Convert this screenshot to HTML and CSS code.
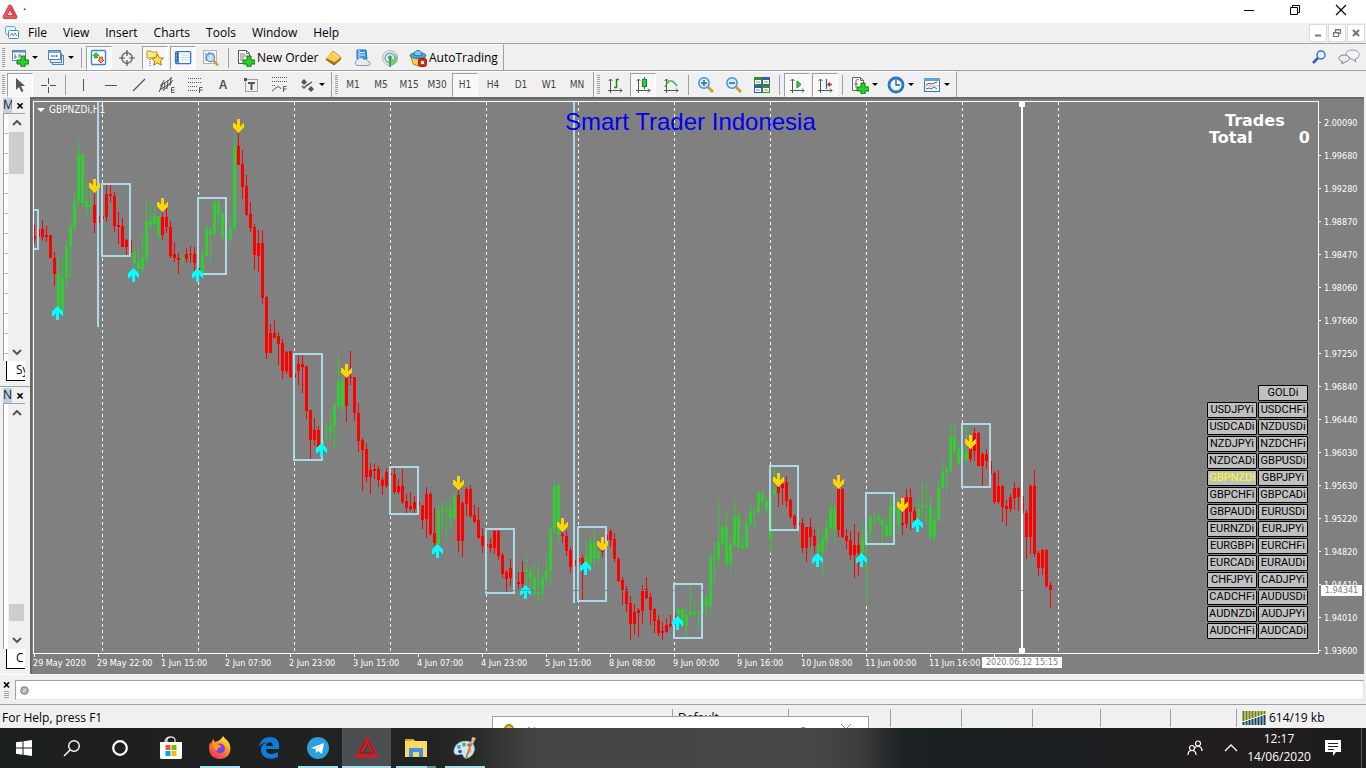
FILE: index.html
```html
<!DOCTYPE html>
<html lang="en">
<head>
  <meta charset="UTF-8" />
  <meta name="viewport" content="width=device-width, initial-scale=1.0" />
  <title>GBPNZDi,H1</title>
  <link rel="stylesheet" href="styles.css">
</head>
<body>
  <header class="titlebar">
    <svg class="app-logo" width="16" height="16" viewBox="0 0 16 16"><path d="M8 2.5 2.5 13h11z" fill="none" stroke="#d9434e" stroke-width="3.8" stroke-linejoin="round"/><path d="M8 2.5 2.5 13h11M6 9.5h5" fill="none" stroke="#f08a90" stroke-width=".7"/></svg>
    <span class="app-name">.</span>
    <div class="win-buttons">
      <button aria-label="Minimize"><svg width="12" height="12" viewBox="0 0 12 12"><path d="M1 6.500h10" stroke="#000"/></svg></button>
      <button aria-label="Restore"><svg width="12" height="12" viewBox="0 0 12 12"><path d="M1.500 3.500h7v7h-7zM3.500 3.500v-2h7v7h-2" fill="none" stroke="#000"/></svg></button>
      <button aria-label="Close"><svg width="12" height="12" viewBox="0 0 12 12"><path d="m1 1 10 10M11 1 1 11" stroke="#000" stroke-width="1.2"/></svg></button>
    </div>
  </header>

  <nav class="menubar">
    <svg class="menu-logo" width="16" height="16" viewBox="0 0 16 16"><rect x="1.500" y="1.500" width="10" height="8" rx="1" fill="#e6f2fb" stroke="#6ea5d2"/><rect x="4.500" y="5.500" width="10" height="8" rx="1" fill="#fff" stroke="#4a8ac4"/><path d="m6 11 2-3 1.500 3L11 8l2 3" fill="none" stroke="#4a8ac4"/></svg>
    <button>File</button>
    <button>View</button>
    <button>Insert</button>
    <button>Charts</button>
    <button>Tools</button>
    <button>Window</button>
    <button>Help</button>
    <div class="mdi-buttons">
      <button aria-label="Minimize chart"><svg width="10" height="10" viewBox="0 0 10 10"><path d="M2 7.500h6" stroke="#6d7a8c" stroke-width="2"/></svg></button>
      <button aria-label="Restore chart"><svg width="10" height="10" viewBox="0 0 10 10"><path d="M1.500 4.500h5v4h-5zM3.500 4V1.500h5v4H7M3 2h6M1 5h6" fill="none" stroke="#6d7a8c" stroke-width="1.2"/></svg></button>
      <button aria-label="Close chart"><svg width="10" height="10" viewBox="0 0 10 10"><path d="m2 2 6 6M8 2 2 8" stroke="#6d7a8c" stroke-width="2.2"/></svg></button>
    </div>
  </nav>

  <div class="toolrow">
    <div class="toolbar">
      <i class="grip"></i>
      <button class="tool drop" aria-label="New chart"><svg class="ico" viewBox="0 0 18 18"><rect x="1.500" y="1.500" width="13" height="10" fill="#fff" stroke="#5b8dbb"/><path d="M1.500 2.500h13" stroke="#5b8dbb" stroke-width="2"/><path d="M4 5v5m-1-2h3m2-3v4m0-3h2" stroke="#5580a8" fill="none"/><path d="M10 7h4v4h4v4h-4v3h-4v-3H6v-4h4z" fill="#2bd12b" stroke="#0b7d12"/></svg></button>
      <button class="tool drop" aria-label="Profiles"><svg class="ico" viewBox="0 0 18 18"><rect x="5.500" y="6.500" width="11" height="9" fill="#dcebf7" stroke="#4c86bd"/><rect x="3.500" y="4.500" width="11" height="9" fill="#dcebf7" stroke="#4c86bd"/><rect x="1.500" y="1.500" width="12" height="9" fill="#fff" stroke="#4c86bd"/><path d="M2 3h11" stroke="#76aadb" stroke-width="2"/><path d="M4 7h7M5.500 6v2m4-2v2" stroke="#6080a0"/></svg></button>
      <i class="sep"></i>
      <button class="tool on" aria-label="Market Watch"><svg class="ico" viewBox="0 0 18 18"><rect x="1.500" y="1.500" width="14" height="14" rx="1" fill="#fff" stroke="#3d86cf" stroke-width="1.4"/><path d="m6 3.500 3 3H7.500V9h-3V6.500H3z" fill="#3dcc32" stroke="#178a17" stroke-width=".7"/><path d="m11 14 3-3h-1.500V8h-3v3H8z" fill="#ff9b6a" stroke="#d63e12" stroke-width=".9"/></svg></button>
      <button class="tool" aria-label="Data Window"><svg class="ico" viewBox="0 0 18 18"><circle cx="9" cy="9" r="5.200" fill="none" stroke="#6b6b6b" stroke-width="1.500"/><path d="M9 1v6m0 4v6M1 9h6m4 0h6" stroke="#555" stroke-width="1.200"/></svg></button>
      <button class="tool on" aria-label="Navigator"><svg class="ico" viewBox="0 0 18 18"><path d="M1 2h4l1 1h5v6H1z" fill="#ffe88a" stroke="#c29a22"/><path d="M4 10v7" stroke="#555" stroke-dasharray="1 1"/><path d="m11.500 5 1.800 3.800 4.200.4-3.100 2.800.9 4.200-3.800-2.200-3.800 2.200.9-4.200L5.500 9.200l4.200-.4z" fill="#ffe052" stroke="#a87c14"/></svg></button>
      <button class="tool on" aria-label="Terminal"><svg class="ico" viewBox="0 0 18 18"><rect x="1.600" y="2.600" width="15" height="12" rx="1" fill="#fff" stroke="#2e7cc7" stroke-width="1.400"/><path d="M3.500 3v11" stroke="#4b98dd" stroke-width="3"/><path d="M7 6h8M7 8.500h8M7 11h8" stroke="#c8d5e2"/><path d="M3 5h1m-1 3h1m-1 3h1" stroke="#003"/></svg></button>
      <button class="tool" aria-label="Strategy Tester"><svg class="ico" viewBox="0 0 18 18"><rect x="1.500" y="1.500" width="13" height="13" fill="#f4f4f4" stroke="#b4b4b4"/><path d="M4 4v8m3-9v6m4-5v5" stroke="#4779ad"/><path d="m11.500 11.500 4.500 5" stroke="#d19d2c" stroke-width="2.600"/><circle cx="8.500" cy="8.500" r="4" fill="#bfe0f8" fill-opacity=".7" stroke="#5595cf" stroke-width="1.300"/></svg></button>
      <i class="sep"></i>
      <button class="tool labelled order"><svg class="ico" viewBox="0 0 18 18"><path d="M1.500 1.500h8l3 3v10h-11z" fill="#fff" stroke="#555"/><path d="M9.500 1.500v3h3M3 5h5M3 7h7M3 9h4M3 11h4" fill="none" stroke="#777"/><path d="M10 7h4v4h4v4h-4v3h-4v-3H6v-4h4z" fill="#2bd12b" stroke="#0b7d12"/></svg>New Order</button>
      <button class="tool" aria-label="MetaEditor"><svg class="ico" viewBox="0 0 18 18"><path d="m8 2 8 6.500-1 2.500-6 5-8-5.500z" fill="#b57c10" stroke="#91620d"/><path d="m8 2 8 6.500-6.500 4.500L1 9z" fill="#f6cf56"/><path d="m8 4 5 4" stroke="#fff3b8"/></svg></button>
      <button class="tool" aria-label="Cloud"><svg class="ico" viewBox="0 0 18 18"><path d="M4 1h9l1 9H4z" fill="#3b9ae6" stroke="#1f6fb8"/><path d="M7 3.500h5M7 6h5M6 1v8" stroke="#dff1ff"/><path d="M4 16.500a3 3 0 0 1 0-5.500 4 4 0 0 1 7-.5 3 3 0 0 1 4 2 2 2 0 0 1 0 4z" fill="#e6ecf4" stroke="#8899b5"/></svg></button>
      <button class="tool" aria-label="Signals"><svg class="ico" viewBox="0 0 18 18"><circle cx="9" cy="9" r="7.500" fill="#dfe9ea" stroke="#a9bfc6"/><circle cx="9" cy="9" r="4.800" fill="none" stroke="#7ba3b5" stroke-width="1.400"/><path d="M9 9v7.500c4 0 7.500-3 7.500-7.500 0-3-1-4-2-5 1 5-2 8-5.500 5z" fill="#7fc47a"/><circle cx="9" cy="8.500" r="2" fill="#3b94aa"/><path d="M9 9v9" stroke="#35a53a" stroke-width="1.800"/></svg></button>
      <button class="tool labelled auto"><svg class="ico" viewBox="0 0 18 18"><path d="m2 8 2 7 5 2 6-3 1-7z" fill="#f3cd50" stroke="#b38c1e"/><ellipse cx="9" cy="6.500" rx="8" ry="3" fill="#4aa3dc" stroke="#2a78ad"/><path d="M5 6c0-6 8-6 8 0-2 1-6 1-8 0z" fill="#82c8ee" stroke="#2a78ad"/><rect x="9.500" y="9.500" width="8" height="8" rx="2" fill="#db2b1b" stroke="#a81408"/><rect x="12" y="12" width="3" height="3" fill="#fff"/></svg>AutoTrading</button>
    </div>
    <div class="tool-right">
      <button class="tool" aria-label="Search"><svg class="ico" viewBox="0 0 18 18"><circle cx="11" cy="7" r="4" fill="#eaf3ff" stroke="#3a72cf" stroke-width="1.500"/><path d="m8 10-5 5" stroke="#2b5fc2" stroke-width="2.600"/></svg></button>
      <button class="tool" aria-label="Chat"><svg width="22" height="18" viewBox="0 0 22 18"><path d="M14 2c9 0 9 8 3 9l1 3-4-3c-8 0-8-9 0-9z" fill="#f4f4f7" stroke="#92929c"/><path d="M6 7c7 0 7 6 1 7l-3 2 .5-2.500C-.5 13-.5 7 6 7z" fill="#ececf2" stroke="#7f7f8a"/></svg></button>
    </div>
  </div>

  <div class="toolrow second">
    <div class="toolbar">
      <i class="grip"></i>
      <button class="tool on" aria-label="Cursor"><svg class="ico" viewBox="0 0 18 18"><path d="M5 2v12l3-3 2.500 5 2-1L10 10h4z" fill="#555"/></svg></button>
      <button class="tool" aria-label="Crosshair"><svg class="ico" viewBox="0 0 18 18"><path d="M9.500 2v6m0 3v6M2 9.500h6m3 0h6" stroke="#555"/></svg></button>
      <i class="sep"></i>
      <button class="tool" aria-label="Vertical Line"><svg class="ico" viewBox="0 0 18 18"><path d="M9.500 3v12" stroke="#555"/></svg></button>
      <button class="tool" aria-label="Horizontal Line"><svg class="ico" viewBox="0 0 18 18"><path d="M3 9.500h12" stroke="#555"/></svg></button>
      <button class="tool" aria-label="Trendline"><svg class="ico" viewBox="0 0 18 18"><path d="M3 15 15 3" stroke="#555" stroke-width="1.200"/></svg></button>
      <button class="tool" aria-label="Equidistant Channel"><svg class="ico" viewBox="0 0 18 18"><path d="M2 10 14 2M2 14 14 6M4 13V7m2 7 1-8m2 7 1-9m2 6 1-9M1 16l5-12M5 15 15 4" stroke="#555"/><path d="M16.500 11.500h-3v5h3m-3-2.500h3" fill="none" stroke="#555"/></svg></button>
      <button class="tool" aria-label="Fibonacci"><svg class="ico" viewBox="0 0 18 18"><path d="M2 2.500h14M2 6.500h14M2 10.500h9M2 14.500h9" stroke="#555" stroke-dasharray="1 1"/><path d="M16.500 11.500h-3V17m0-3h3" fill="none" stroke="#555"/></svg></button>
      <button class="tool glyph">A</button>
      <button class="tool" aria-label="Text Label"><svg class="ico" viewBox="0 0 18 18"><rect x="3.500" y="3.500" width="12" height="12" fill="none" stroke="#555" stroke-dasharray="1 1"/><path d="M2 2h3v3H2z" fill="#555"/><path d="M6 7h7M9.500 7v7" stroke="#555" stroke-width="2" fill="none"/></svg></button>
      <button class="tool" aria-label="Fibo Fan"><svg class="ico" viewBox="0 0 18 18"><path d="M2 1.500h15M2 5.500h15M2 9.500h4" stroke="#555" stroke-dasharray="1 1"/><path d="m2 15 5-4c3-1 3 1 4 2" fill="none" stroke="#555"/><path d="M16.500 10.500h-3V16m0-3h3" fill="none" stroke="#555"/></svg></button>
      <button class="tool drop" aria-label="Arrows"><svg class="ico" viewBox="0 0 18 18"><path d="m6 3 3 3-3 3-3-3zM13 10l3 3-3 3-3-3z" fill="#555"/><path d="m4 10 2 2 4-4M8 10l6-4" fill="none" stroke="#555" stroke-width="1.500"/></svg></button>
      <i class="sep edge"></i>
      <i class="grip"></i>
      <button class="tool tf">M1</button>
      <button class="tool tf">M5</button>
      <button class="tool tf">M15</button>
      <button class="tool tf">M30</button>
      <button class="tool tf on">H1</button>
      <button class="tool tf">H4</button>
      <button class="tool tf">D1</button>
      <button class="tool tf">W1</button>
      <button class="tool tf">MN</button>
      <i class="sep edge"></i>
      <i class="grip"></i>
      <button class="tool" aria-label="Bar Chart"><svg class="ico" viewBox="0 0 18 18"><path d="M4.500 3v14M2 14.500h14M2.500 5l2-2 2 2m7.500 7.500 2 2-2 2" fill="none" stroke="#555"/><path d="M8 11.500h2.500v-8H13" fill="none" stroke="#0a8f1c" stroke-width="1.500"/></svg></button>
      <button class="tool on" aria-label="Candlesticks"><svg class="ico" viewBox="0 0 18 18"><path d="M4.500 3v14M2 14.500h14M2.500 5l2-2 2 2m7.500 7.500 2 2-2 2" fill="none" stroke="#555"/><path d="M10.500 1v12" stroke="#0a8f1c"/><rect x="8.500" y="3.500" width="4" height="7" fill="#2ed13b" stroke="#0a8f1c"/></svg></button>
      <button class="tool" aria-label="Line Chart"><svg class="ico" viewBox="0 0 18 18"><path d="M4.500 3v14M2 14.500h14M2.500 5l2-2 2 2m7.500 7.500 2 2-2 2" fill="none" stroke="#555"/><path d="M3 11c4-8 7-8 12-1" fill="none" stroke="#35a443" stroke-width="1.300"/></svg></button>
      <i class="sep"></i>
      <button class="tool" aria-label="Zoom In"><svg class="ico" viewBox="0 0 18 18"><path d="m11 11 5 5" stroke="#d3a02c" stroke-width="3"/><circle cx="7" cy="7" r="5.200" fill="#d5ecff" stroke="#4a90d2" stroke-width="1.500"/><path d="M4 7h6M7 4v6" stroke="#2b6cb0" stroke-width="1.600"/></svg></button>
      <button class="tool" aria-label="Zoom Out"><svg class="ico" viewBox="0 0 18 18"><path d="m11 11 5 5" stroke="#d3a02c" stroke-width="3"/><circle cx="7" cy="7" r="5.200" fill="#d5ecff" stroke="#4a90d2" stroke-width="1.500"/><path d="M4 7h6" stroke="#2b6cb0" stroke-width="1.600"/></svg></button>
      <button class="tool" aria-label="Tile Windows"><svg class="ico" viewBox="0 0 18 18"><path d="M1 1h8v8H1zM9 9h8v8H9z" fill="#3a8c2b"/><path d="M9 1h8v8H9zM1 9h8v8H1z" fill="#2a5fb5"/><path d="M2 4h6v4H2zM10 4h6v4h-6zM2 12h6v4H2zM10 12h6v4h-6z" fill="#fff"/><path d="M3 6h4m4 0h4M3 14h4m4 0h4" stroke="#7aa06f"/></svg></button>
      <i class="sep"></i>
      <button class="tool on" aria-label="Auto Scroll"><svg class="ico" viewBox="0 0 18 18"><path d="M4.500 3v14M2 14.500h14M2.500 5l2-2 2 2m7.500 7.500 2 2-2 2" fill="none" stroke="#555"/><path d="m9 5 4 3.500L9 12z" fill="#35c940" stroke="#0a8f1c"/></svg></button>
      <button class="tool on" aria-label="Chart Shift"><svg class="ico" viewBox="0 0 18 18"><path d="M4.500 3v14M2 14.500h14M2.500 5l2-2 2 2m7.500 7.500 2 2-2 2" fill="none" stroke="#555"/><path d="M10.500 3v10" stroke="#2d6fa8" stroke-width="1.300"/><path d="M16 8.500h-4m2-2-2 2 2 2" fill="none" stroke="#c43c10" stroke-width="1.400"/></svg></button>
      <i class="sep"></i>
      <button class="tool drop" aria-label="Indicators"><svg class="ico" viewBox="0 0 18 18"><path d="M1.500 1.500h8l3 3v10h-11z" fill="#fff" stroke="#666"/><path d="M9.500 1.500v3h3M5 12V5c0-2 2-2 3-1M3 8h4" fill="none" stroke="#666"/><path d="M10 7h4v4h4v4h-4v3h-4v-3H6v-4h4z" fill="#2bd12b" stroke="#0b7d12"/></svg></button>
      <button class="tool drop" aria-label="Periods"><svg class="ico" viewBox="0 0 18 18"><circle cx="9" cy="9" r="7" fill="#eaf5ff" stroke="#2676ca" stroke-width="2.800"/><path d="M9 4v5h4" fill="none" stroke="#555" stroke-width="1.300"/></svg></button>
      <button class="tool drop" aria-label="Templates"><svg class="ico" viewBox="0 0 18 18"><rect x="1.500" y="2.500" width="15" height="13" fill="#fff" stroke="#3479b8"/><path d="M1 3.500h16" stroke="#5ea4e0" stroke-width="3"/><path d="m3 8.500 3-1 3 .5 5-2" fill="none" stroke="#a2391f"/><path d="m3 13 3-1 2 1 3-2 3 2" fill="none" stroke="#2d8a3a"/><path d="M2 10h14" stroke="#99b8d2"/></svg></button>
    </div>
  </div>

  <main class="workspace">
    <aside class="sidebar">
      <section class="panel watch">
        <div class="panel-head"><b>M</b><button aria-label="Close Market Watch">×</button></div>
        <div class="panel-body ruled">
          <div class="scroll">
            <svg width="10" height="6" viewBox="0 0 10 6"><path d="m1 5 4-4 4 4" fill="none" stroke="#555" stroke-width="2"/></svg>
            <i class="thumb top"></i>
            <svg width="10" height="6" viewBox="0 0 10 6"><path d="m1 1 4 4 4-4" fill="none" stroke="#555" stroke-width="2"/></svg>
          </div>
        </div>
        <div class="panel-tab">Sy</div>
      </section>
      <section class="panel">
        <div class="panel-head"><b>N</b><button aria-label="Close Navigator">×</button></div>
        <div class="panel-body">
          <div class="scroll">
            <svg width="10" height="6" viewBox="0 0 10 6"><path d="m1 5 4-4 4 4" fill="none" stroke="#555" stroke-width="2"/></svg>
            <i class="thumb low"></i>
            <svg width="10" height="6" viewBox="0 0 10 6"><path d="m1 1 4 4 4-4" fill="none" stroke="#555" stroke-width="2"/></svg>
          </div>
        </div>
        <div class="panel-tab">C</div>
      </section>
    </aside>

    <div class="chart">
      <div class="plot">
        <div class="symbol"><i></i>GBPNZDi,H1</div>
        <svg id="candles" class="candles"></svg>
        <div class="banner">Smart Trader Indonesia</div>
        <div class="trades">
          <div class="trades-title">Trades</div>
          <div class="trades-row"><span>Total</span><span>0</span></div>
        </div>
        <div id="pairs" class="pairs"></div>
        <div class="bid-line"></div>
      </div>
      <div class="prices">
        <div id="priceList"></div>
        <span class="bid-tag">1.94341</span>
      </div>
      <div class="times">
        <div id="timeList" class="time-list"></div>
        <span class="time-tag">2020.06.12 15:15</span>
      </div>
    </div>
  </main>

  <section class="terminal">
    <div class="terminal-side"><button aria-label="Close Terminal">×</button><i></i></div>
    <div class="terminal-box"><svg width="9" height="9" viewBox="0 0 9 9"><circle cx="4.500" cy="4.500" r="3.800" fill="#b5b5b5" stroke="#777"/><path d="m3 6 3-3" stroke="#eee"/></svg></div>
  </section>

  <footer class="status">
    <span class="cell help">For Help, press F1</span>
    <span class="cell profile">Default</span>
    <span class="cell w102"></span>
    <span class="cell w71"></span>
    <span class="cell w71"></span>
    <span class="cell w68"></span>
    <span class="cell w70"></span>
    <span class="cell w66"></span>
    <span class="cell net"><svg width="24" height="14" viewBox="0 0 24 14"><path d="M1.500 0v10m3-10v9m3-9v8m3-8v7m3-7v6m3-6v5m3-5v4m3-4v3" stroke="#6b8000" stroke-width="2"/><path d="M1.500 11v3m3-4v4m3-5v5m3-6v6m3-7v7m3-8v8m3-9v9m3-10v10" stroke="#0e4260" stroke-width="2"/></svg>614/19 kb</span>
    <div class="popup">
      <svg width="12" height="12" viewBox="0 0 12 12"><path d="M2 12V6a4 4 0 0 1 8 0v6" fill="#e9c64b" stroke="#b58a12" stroke-width="2"/></svg>
      <span class="popup-name">N</span>
      <span>?</span>
      <svg width="12" height="12" viewBox="0 0 12 12"><path d="m1 1 10 10M11 1 1 11" stroke="#888"/></svg>
    </div>
  </footer>

  <div class="taskbar">
    <button class="start" aria-label="Start"><svg width="16" height="16" viewBox="0 0 16 16"><path d="M0 2.300 6.500 1.400v6.200H0zM7.500 1.200 16 0v7.600H7.500zM0 8.500h6.500v6.200L0 13.800zM7.500 8.500H16V16l-8.500-1.200z" fill="#fff"/></svg></button>
    <button class="start" aria-label="Search"><svg width="18" height="18" viewBox="0 0 18 18"><circle cx="11" cy="7" r="5.300" fill="none" stroke="#fff" stroke-width="1.400"/><path d="M7 11 1 17" stroke="#fff" stroke-width="1.400"/></svg></button>
    <button class="start" aria-label="Cortana"><svg width="18" height="18" viewBox="0 0 18 18"><circle cx="9" cy="9" r="6.800" fill="none" stroke="#fff" stroke-width="2.200"/></svg></button>
    <button class="app" aria-label="Store"><svg width="24" height="24" viewBox="0 0 24 24"><path d="M8 7V4a4 3 0 0 1 8 0v3M6 7c0-5 3-6 6-6" fill="none" stroke="#ddd" stroke-width="1.300"/><path d="M1 6h22v16l-1 1H2l-1-1z" fill="#fff"/><path d="M6.500 9h5v5h-5z" fill="#f0562b"/><path d="M12.500 9h5v5h-5z" fill="#7fb900"/><path d="M6.500 15h5v5h-5z" fill="#00a3ee"/><path d="M12.500 15h5v5h-5z" fill="#ffb800"/></svg></button>
    <button class="app open" aria-label="Firefox"><svg width="24" height="24" viewBox="0 0 24 24"><defs><linearGradient id="fx" x1=".8" y1="0" x2=".2" y2="1"><stop offset="0" stop-color="#fff14a"/><stop offset=".45" stop-color="#ff9022"/><stop offset="1" stop-color="#f2265f"/></linearGradient></defs><path d="M15 0c1 2 4 4 5.500 6 4 6 2 17-8.500 17S-1 13 2.500 6L3 8l2-5 2 3 3-1c2-1 4-3 5-5z" fill="url(#fx)"/><circle cx="12" cy="12.500" r="5" fill="#7542e5"/><path d="M5 7c3-1 4 0 6 2l3 1-3 2c-2 0-2 2-1 3-3 0-5-3-5-8z" fill="#ff9a26"/></svg></button>
    <button class="app" aria-label="Edge"><svg width="22" height="22" viewBox="0 0 22 22"><path d="M1 10C2 4 6 0 12 0c7 0 10 5 9 12H8c0 6 7 6 12 3v5c-7 4-17 1-17-7 0-4 2-6 6-8-5 1-7 3-8 5zm7-1h7c0-5-7-5-7 0z" fill="#0f7bdc"/></svg></button>
    <button class="app open" aria-label="Telegram"><svg width="22" height="22" viewBox="0 0 22 22"><circle cx="11" cy="11" r="11" fill="#2ba0da"/><path d="m4 11 13-5-2 11-4-3-2 2-.5-4L14 8.500 7.500 12z" fill="#fff"/></svg></button>
    <button class="app open current" aria-label="MetaTrader"><svg width="24" height="24" viewBox="0 0 24 24"><path d="M12 3 3 20h18z" fill="none" stroke="#bf242c" stroke-width="4.500" stroke-linejoin="round"/><path d="M11 3 4 17h13M13 4l7 14M8 18l5-9" fill="none" stroke="#7c1b20" stroke-width="1"/></svg></button>
    <button class="app open stacked" aria-label="File Explorer"><svg width="22" height="20" viewBox="0 0 22 20"><path d="M0 1h8l2 2h12v16H0z" fill="#ffd766"/><path d="M0 1h8v2H0z" fill="#e0a11b"/><path d="M4 10h14v9h-4v-5H8v5H4z" fill="#3e96dd"/></svg></button>
    <button class="app open" aria-label="Paint"><svg width="24" height="24" viewBox="0 0 24 24"><path d="M1 15C2 6 11 4 17 6c7 3 5 14-3 16-5 1-2-4-6-4-4 1-7 1-7-3z" fill="#cde8f6" stroke="#9bc3d8"/><circle cx="6" cy="11" r="2" fill="#4ea3d8"/><circle cx="11" cy="8.500" r="2" fill="#57b947"/><circle cx="16" cy="9" r="1.800" fill="#e94b35"/><circle cx="7" cy="15.500" r="1.800" fill="#384a8a"/><circle cx="17" cy="15" r="2" fill="#f7b93c"/><path d="m13 22 6-16" stroke="#c07c34" stroke-width="2"/><path d="m18 7 1-6 4 1-3 6z" fill="#e0b98a"/></svg></button>
    <div class="tray">
      <button aria-label="People"><svg width="16" height="16" viewBox="0 0 16 16"><g fill="none" stroke="#fff" stroke-width="1.200"><circle cx="11" cy="3.500" r="2.500"/><circle cx="5" cy="8" r="2.500"/><path d="M1 15c0-6 8-6 8 0M8 8c2-3 7-2 7 3"/></g></svg></button>
      <button aria-label="Hidden icons"><svg width="14" height="8" viewBox="0 0 14 8"><path d="m1 7 6-6 6 6" fill="none" stroke="#fff" stroke-width="1.300"/></svg></button>
      <div class="clock"><span>12:17</span><span>14/06/2020</span></div>
      <button class="notes" aria-label="Notifications"><svg width="16" height="16" viewBox="0 0 16 16"><path d="M0 0h16v12h-5l-3 4v-4H0z" fill="#fff"/><path d="M3 3.500h10M3 6.500h10M3 9.500h6" stroke="#222"/></svg></button>
      <i class="show-desktop"></i>
    </div>
  </div>

  <script src="chart.js"></script>
</body>
</html>
```

FILE: styles.css
```css
* {
  box-sizing: border-box;
}
body {
  margin: 0;
  height: 100vh;
  display: flex;
  flex-direction: column;
  overflow: hidden;
  background: #f0f0f0;
  color: #000;
  font-family: "Open Sans", "Noto Sans", sans-serif;
  font-size: 12px;
}
button {
  margin: 0;
  padding: 0;
  border: 0;
  background: transparent;
  color: inherit;
  font: inherit;
}
svg {
  display: block;
  flex: none;
}

/* title + menu */
.titlebar {
  flex: none;
  display: flex;
  align-items: center;
  height: 23px;
  padding-left: 2px;
  background: #fff;
}
.app-name {
  margin-left: 5px;
  line-height: 12px;
  padding-bottom: 12px;
}
.win-buttons {
  display: flex;
  align-self: stretch;
  margin-left: auto;
  padding-right: 2px;
}
.win-buttons button {
  width: 46px;
  height: 20px;
  display: flex;
  align-items: center;
  justify-content: center;
}
.menubar {
  flex: none;
  display: flex;
  align-items: center;
  height: 20px;
  padding-left: 4px;
}
.menubar > button {
  padding: 0 8px;
  line-height: 18px;
}
.mdi-buttons {
  display: flex;
  gap: 1px;
  margin-left: auto;
  padding-right: 1px;
}
.mdi-buttons button {
  width: 18px;
  height: 18px;
  display: flex;
  align-items: center;
  justify-content: center;
  background: #fff;
  border: 1px solid #dcdcdc;
}

/* toolbars */
.toolrow {
  flex: none;
  display: flex;
  height: 27px;
  border-top: 1px solid #a0a0a0;
}
.toolrow .toolbar {
  display: flex;
  align-items: center;
  padding: 0 2px;
  border-top: 1px solid #fff;
  border-right: 1px solid #a0a0a0;
}
.grip {
  flex: none;
  width: 3px;
  height: 20px;
  margin-right: 1px;
  background: repeating-linear-gradient(#a0a0a0 0 1px, #f0f0f0 1px 2px);
}
.sep {
  flex: none;
  width: 1px;
  height: 20px;
  margin: 0 3px;
  background: #a0a0a0;
}
.sep.edge {
  height: 25px;
  margin: 0 3px 0 2px;
}
.tool {
  flex: none;
  display: flex;
  align-items: center;
  justify-content: center;
  width: 28px;
  height: 24px;
  border: 1px solid transparent;
}
.tool.on {
  width: 26px;
  margin: 0 1px;
  background: #f8f8f8;
  border-color: #a0a0a0 #fff #fff #a0a0a0;
}
.ico {
  width: 18px;
  height: 18px;
}
.tool.drop {
  width: 36px;
  gap: 3px;
}
.tool.drop::after {
  content: "";
  border: 3px solid transparent;
  border-top-color: #000;
  border-bottom: 0;
}
.tool.labelled {
  justify-content: flex-start;
  gap: 2px;
  padding-left: 4px;
  white-space: nowrap;
}
.tool.order {
  width: 88px;
}
.tool.auto {
  width: 97px;
}
.tool.glyph {
  color: #555;
  font-family: "Liberation Sans", sans-serif;
  font-weight: bold;
}
.tool.tf {
  color: #444;
  font-family: "DejaVu Sans Condensed", "Open Sans", sans-serif;
  font-size: 10px;
}
.tool-right {
  display: flex;
  align-items: center;
  gap: 2px;
  margin-left: auto;
  padding-right: 3px;
}

/* side panels */
.workspace {
  flex: 1;
  min-height: 0;
  display: flex;
}
.sidebar {
  flex: none;
  display: flex;
  flex-direction: column;
  width: 30px;
}
.panel {
  flex: 1;
  min-height: 0;
  display: flex;
  flex-direction: column;
  padding: 1px 5px 5px 3px;
}
.panel.watch {
  flex: none;
  height: 290px;
  border-bottom: 1px solid #a0a0a0;
}
.panel-head {
  display: flex;
  gap: 3px;
  height: 15px;
  line-height: 14px;
}
.panel-head b {
  width: 9px;
  overflow: hidden;
  background: #bfd0e4;
  color: #223;
  font-weight: normal;
}
.panel-head button {
  width: 10px;
  font-size: 14px;
  font-weight: bold;
}
.panel-body {
  flex: 1;
  display: flex;
  justify-content: flex-end;
  border: 1px solid #a0a0a0;
  border-right: 0;
  border-bottom: 0;
  background: #fff;
}
.panel-body.ruled {
  background: repeating-linear-gradient(#fff 0 19px, #c0c0c0 19px 20px);
}
.scroll {
  flex: none;
  display: flex;
  flex-direction: column;
  align-items: center;
  justify-content: space-between;
  width: 17px;
  padding: 6px 0;
  background: #f0f0f0;
}
.thumb {
  width: 15px;
  background: #cdcdcd;
}
.thumb.top {
  height: 42px;
  margin: 6px 0 auto;
}
.thumb.low {
  height: 17px;
  margin: auto 0 16px;
}
.panel-tab {
  height: 20px;
  margin-left: 3px;
  padding-left: 9px;
  overflow: hidden;
  border-left: 1px solid #000;
  border-bottom: 1px solid #000;
  background: #fff;
  line-height: 18px;
}

/* chart window */
.chart {
  flex: 1;
  min-width: 0;
  display: grid;
  grid-template-columns: 1fr 45px;
  grid-template-rows: 1fr 20px;
  margin-right: 2px;
  padding: 2px 0 0 1px;
  border: 2px solid #696969;
  border-width: 2px 0 0 2px;
  background: #808080;
  color: #fff;
  font-family: "DejaVu Sans Condensed", "Noto Sans", sans-serif;
  font-size: 9px;
}
.plot {
  position: relative;
  min-width: 0;
  border: 1px solid #fff;
}
.candles {
  position: absolute;
  top: 0;
  left: 0;
  width: 100%;
  height: 100%;
}
.symbol {
  position: absolute;
  top: 1px;
  left: 3px;
  display: flex;
  align-items: center;
  gap: 4px;
  font-size: 10px;
  line-height: 13px;
}
.symbol i {
  border: 4px solid transparent;
  border-top-color: #fff;
  border-bottom: 0;
}
.banner {
  position: absolute;
  top: 6px;
  left: 531px;
  color: #0000f0;
  font-family: "Liberation Sans", Arial, sans-serif;
  font-size: 24px;
  line-height: 28px;
  white-space: nowrap;
}
.trades {
  position: absolute;
  top: 10px;
  right: 8px;
  width: 101px;
  font-family: "DejaVu Sans", sans-serif;
  font-size: 16px;
  font-weight: bold;
  line-height: 17px;
}
.trades-title {
  padding-left: 16px;
}
.trades-row {
  display: flex;
  justify-content: space-between;
}
.pairs {
  position: absolute;
  right: 10px;
  bottom: 14px;
  display: grid;
  grid-template-columns: 50px 50px;
  gap: 1px;
}
.pair {
  height: 16px;
  border: 1px solid #000;
  border-radius: 1px;
  background: #c0c0c0;
  color: #000;
  font-family: Roboto, sans-serif;
  font-size: 11px;
  line-height: 14px;
  text-align: center;
}
.pair.first {
  grid-column: 2;
}
.pair.active {
  color: #ffff00;
}
.bid-line {
  position: absolute;
  left: 0;
  right: 0;
  bottom: 62px;
  height: 1px;
  background: #708090;
  opacity: 0.8;
}
.prices {
  position: relative;
  grid-row: 1 / 3;
  grid-column: 2;
  padding-top: 5px;
}
.price {
  display: flex;
  align-items: center;
  gap: 3px;
  height: 33px;
}
.price::before {
  content: "";
  width: 2px;
  height: 1px;
  background: #fff;
}
.bid-tag,
.time-tag {
  position: absolute;
  background: #fff;
  color: #808080;
  line-height: 11px;
  text-align: center;
}
.bid-tag {
  left: 2px;
  bottom: 78px;
  width: 41px;
}
.times {
  position: relative;
  min-width: 0;
}
.time-list {
  display: flex;
}
.time {
  flex: none;
  width: 64px;
  white-space: nowrap;
  line-height: 12px;
}
.time::before {
  content: "";
  display: block;
  width: 1px;
  height: 3px;
  margin-left: 1px;
  background: #fff;
}
.time-tag {
  top: 3px;
  left: 949px;
  width: 80px;
}

/* terminal strip + status bar */
.terminal {
  flex: none;
  display: flex;
  height: 30px;
  padding: 5px 2px 4px 0;
  border-top: 1px solid #fff;
}
.terminal-side {
  display: flex;
  flex-direction: column;
  align-items: center;
  gap: 2px;
  width: 15px;
  padding-right: 2px;
}
.terminal-side button {
  font-size: 14px;
  font-weight: bold;
  line-height: 9px;
}
.terminal-side i {
  width: 5px;
  height: 8px;
  background: repeating-linear-gradient(#a0a0a0 0 1px, #f0f0f0 1px 2px);
}
.terminal-box {
  flex: 1;
  display: flex;
  align-items: center;
  padding-left: 4px;
  border: 1px solid #a0a0a0;
  border-right-color: #e3e3e3;
  border-bottom-color: #e3e3e3;
  background: #fff;
}
.status {
  position: relative;
  flex: none;
  display: flex;
  height: 24px;
  padding: 4px 0 1px;
  border-top: 1px solid #a0a0a0;
}
.cell {
  flex: none;
  padding-left: 5px;
  border-left: 1px solid #a0a0a0;
  line-height: 18px;
}
.cell.help {
  flex: 1;
  padding-left: 2px;
  border-left: 0;
}
.cell.profile {
  width: 116px;
}
.cell.w102 {
  width: 102px;
}
.cell.w71 {
  width: 71px;
}
.cell.w70 {
  width: 70px;
}
.cell.w68 {
  width: 68px;
}
.cell.w66 {
  width: 66px;
}
.cell.net {
  display: flex;
  align-items: center;
  gap: 3px;
  width: 130px;
}
.popup {
  position: absolute;
  top: 11px;
  left: 492px;
  display: flex;
  gap: 12px;
  width: 377px;
  height: 12px;
  padding: 6px 16px 0 10px;
  overflow: hidden;
  border: 1px solid #a0a0a0;
  border-bottom: 0;
  background: #fff;
  color: #888;
}
.popup-name {
  margin-right: auto;
}
.popup span + svg {
  margin-left: 22px;
}

/* taskbar */
.taskbar {
  flex: none;
  display: flex;
  height: 40px;
  background: linear-gradient(90deg, #1c1f20 0, #222 32%, #2b2b2a 35%, #444442 39%, #464646 60%, #3c3c3c 63%, #1c2124 66%, #1b1f22 78%, #231d1d 90%, #1c1c1d 100%);
  color: #fff;
}
.taskbar button {
  display: flex;
  align-items: center;
  justify-content: center;
  height: 40px;
}
.start {
  width: 48px;
}
.app {
  width: 49px;
}
.start + .app {
  margin-left: 2px;
}
.app.open {
  background: linear-gradient(#a6def0, #a6def0) center bottom / 40px 2px no-repeat;
}
.app.current {
  background-color: #4b4f51;
  background-size: 100% 2px;
}
.app.stacked {
  background: linear-gradient(90deg, #a6def0 31px, #6c94a0 31px) center bottom / 40px 2px no-repeat;
}
.tray {
  display: flex;
  margin-left: auto;
}
.tray button {
  width: 36px;
}
.clock {
  display: flex;
  flex-direction: column;
  align-items: center;
  width: 60px;
  padding-top: 2px;
  line-height: 18px;
}
.tray .notes {
  width: 52px;
  padding-right: 4px;
}
.show-desktop {
  width: 5px;
  border-left: 1px solid #555;
}
```

FILE: chart.js
```js
const UP = '#32cd32';
const DOWN = '#ff0000';

// runs of same-coloured bars, 4px apart: [first x, colour, [high, low, body top, body bottom], ...]
const runs = [
  [34, DOWN, [225,243,236,239], [228,238,229,237], [220,241,229,237], [226,242,235,237], [235,258,235,258], [252,286,258,274]],
  [58, UP, [255,308,273,308], [259,311,278,311], [240,288,247,278], [220,279,227,247], [192,231,201,228], [140,207,154,202], [154,207,154,203], [180,219,201,207], [190,212,205,207]],
  [94, DOWN, [193,233,205,223], [212,229,216,223], [215,229,216,219], [185,222,194,217], [185,202,194,196], [192,232,196,226], [212,244,225,227], [218,247,226,247], [239,255,240,247], [240,253,240,253]],
  [134, UP, [247,268,252,263], [247,272,262,269], [234,273,258,269], [200,264,221,259], [205,230,221,226], [206,225,216,225], [216,242,216,236]],
  [162, DOWN, [212,240,217,235], [208,233,217,227], [221,258,227,256], [242,262,254,258], [253,274,258,260]],
  [182, UP, [255,264,258,259]],
  [186, DOWN, [248,263,254,259], [246,263,254,255], [247,272,254,263], [263,272,268,270]],
  [202, UP, [250,276,255,275], [224,257,229,256], [229,261,229,234], [200,237,202,233], [200,226,202,214], [213,239,213,237], [234,242,237,239], [219,244,229,239], [133,230,146,229]],
  [238, DOWN, [133,165,146,165], [150,199,164,187], [175,216,186,215], [202,232,214,228], [224,270,227,255], [230,272,243,256], [230,304,243,298], [296,359,297,353], [324,353,333,353], [320,338,333,338], [332,365,336,344], [339,379,343,371], [351,374,352,371], [351,378,351,377], [353,379,374,378], [354,385,364,371], [355,393,364,367], [366,419,366,411], [410,459,410,440], [418,446,430,440], [426,447,430,447]],
  [322, UP, [432,447,440,446], [423,440,431,432], [412,443,425,432], [404,448,405,426], [355,409,381,406], [377,412,381,406]],
  [346, DOWN, [377,422,377,406], [351,385,377,378], [377,421,377,413], [403,452,413,441], [438,491,440,450], [443,482,449,477], [463,494,470,477], [464,479,469,471], [466,487,469,480], [477,495,480,486], [468,488,472,486], [464,477,473,475], [468,494,474,492], [479,494,486,492], [469,504,486,502], [494,513,501,508], [492,511,506,509], [496,513,502,509], [501,507,502,505], [505,529,505,520], [487,538,494,519], [492,536,494,534], [508,546,533,543]],
  [438, UP, [505,546,510,544], [500,530,509,511], [503,541,510,511], [500,530,510,518], [493,520,495,518]],
  [458, DOWN, [489,552,495,541], [501,557,503,541], [487,516,489,504], [485,518,489,516], [505,523,515,522], [507,539,520,538], [528,553,536,546], [544,553,544,546], [538,553,544,548], [530,554,531,548], [530,560,531,556], [553,578,555,574], [570,592,572,579], [559,586,568,578], [568,582,577,578], [572,589,582,584], [561,590,572,584]],
  [526, UP, [556,585,570,572], [567,595,571,579], [564,595,578,594], [564,603,592,594], [574,600,578,593], [555,583,570,579], [525,587,529,571], [484,534,486,529], [483,544,485,535]],
  [562, DOWN, [531,543,534,536], [531,556,536,551], [547,573,550,567], [560,573,560,566], [556,566,558,562], [555,600,558,565]],
  [586, UP, [540,570,557,565], [535,566,542,564], [530,566,542,559], [550,563,552,559]],
  [602, DOWN, [549,557,550,552], [531,550,535,540], [529,547,531,540], [533,562,539,559], [557,582,559,581], [577,605,580,590], [586,612,589,604], [596,640,603,624], [604,634,612,624], [608,637,610,613], [585,624,590,611], [577,599,589,598], [593,625,597,610], [608,633,609,621], [615,636,620,633], [622,640,631,633], [618,633,625,632], [615,628,624,626], [613,623,615,618]],
  [678, UP, [608,620,609,614], [608,627,609,626], [608,637,615,626], [584,617,612,615], [602,617,612,614], [611,630,612,613], [598,613,598,613], [594,616,598,606], [550,611,558,606], [543,582,558,559], [500,566,542,559], [525,546,527,543], [509,568,527,564], [540,572,544,563], [500,546,516,545], [510,552,516,547], [534,550,545,548], [515,548,523,548], [503,527,512,524], [510,528,511,513], [492,515,493,512], [489,505,494,502], [497,514,502,509], [488,553,495,539], [467,497,490,495]],
  [778, DOWN, [485,507,487,493], [483,505,484,488], [476,507,482,501], [499,519,500,517], [514,529,516,525], [523,525,523,525], [518,553,523,548], [527,562,527,548], [518,547,527,537], [529,553,536,546]],
  [818, UP, [528,554,545,552], [533,576,539,552], [519,549,527,541], [503,533,509,528], [504,544,509,530]],
  [838, DOWN, [488,537,489,530], [488,538,489,537], [529,549,536,541], [531,560,540,555], [524,578,545,555], [532,576,545,553]],
  [862, UP, [524,555,538,553], [532,604,532,546], [516,543,517,531], [511,525,517,518], [510,522,517,520], [518,543,519,526], [520,538,525,536], [493,537,506,536], [503,525,506,510], [500,534,506,525]],
  [902, DOWN, [510,535,523,525], [489,528,497,524], [488,530,497,512], [507,522,511,520]],
  [918, UP, [499,519,509,519], [483,517,505,507], [483,525,506,507], [496,540,506,537], [509,541,520,537], [480,522,487,521], [459,488,472,488], [467,492,469,473], [425,472,436,471], [424,454,436,450], [443,466,449,464], [447,470,450,458], [424,462,451,460]],
  [970, DOWN, [448,462,449,459], [428,461,433,451], [432,466,433,466], [452,486,454,466], [449,469,454,461], [461,475,461,474], [471,504,473,502], [470,504,486,502], [485,522,486,507], [500,526,506,509], [494,512,497,509], [482,510,488,498], [487,511,488,497], [496,513,496,513], [510,559,513,537], [484,554,486,537], [470,557,486,554], [551,576,553,568], [549,575,550,568], [549,588,550,586], [582,608,585,591]]
];

const dayLines = [102, 198, 294, 390, 486, 578, 674, 770, 866, 962, 1058];

// session boxes: x1, y1, x2, y2
const boxes = [
  [10,210,38,249], [102,184,130,256], [198,198,226,274], [294,354,322,460], [390,467,418,514],
  [486,529,514,593], [578,527,606,601], [674,584,702,638], [770,466,798,530], [866,493,894,544], [962,424,990,487]
];

const sells = [[94,192], [162,211], [238,132], [346,377], [458,489], [562,531], [602,550], [778,486], [838,488], [902,511], [970,448]];
const buys = [[57,306], [133,268], [197,268], [321,443], [437,544], [525,585], [585,561], [677,616], [817,553], [861,553], [917,518]];

const pairs = [
  'GOLDi', 'USDJPYi', 'USDCHFi', 'USDCADi', 'NZDUSDi', 'NZDJPYi', 'NZDCHFi', 'NZDCADi', 'GBPUSDi', 'GBPNZDi',
  'GBPJPYi', 'GBPCHFi', 'GBPCADi', 'GBPAUDi', 'EURUSDi', 'EURNZDi', 'EURJPYi', 'EURGBPi', 'EURCHFi', 'EURCADi',
  'EURAUDi', 'CHFJPYi', 'CADJPYi', 'CADCHFi', 'AUDUSDi', 'AUDNZDi', 'AUDJPYi', 'AUDCHFi', 'AUDCADi'
];

const prices = [
  '2.00090', '1.99680', '1.99280', '1.98870', '1.98470', '1.98060', '1.97660', '1.97250', '1.96840',
  '1.96440', '1.96030', '1.95630', '1.95220', '1.94820', '1.94410', '1.94010', '1.93600'
];

const times = [
  '29 May 2020', '29 May 22:00', '1 Jun 15:00', '2 Jun 07:00', '2 Jun 23:00', '3 Jun 15:00', '4 Jun 07:00', '4 Jun 23:00',
  '5 Jun 15:00', '8 Jun 08:00', '9 Jun 00:00', '9 Jun 16:00', '10 Jun 08:00', '11 Jun 00:00', '11 Jun 16:00', ''
];

function drawChart() {
  let out = '';

  dayLines.forEach(x => {
    out += `<path d="M${x + 0.5} 102V653" stroke="#fff" stroke-dasharray="3 3"/>`;
  });

  runs.forEach(([start, color, ...bars]) => {
    bars.forEach(([high, low, top, bottom], i) => {
      const x = start + i * 4;
      out += `<rect x="${x}" y="${high}" width="1" height="${low - high}" fill="${color}"/>`;
      out += `<rect x="${x - 1}" y="${top}" width="3" height="${Math.max(bottom - top, 1)}" fill="${color}"/>`;
    });
  });

  boxes.forEach(([x1, y1, x2, y2]) => {
    out += `<rect x="${x1}" y="${y1}" width="${x2 - x1}" height="${y2 - y1}" fill="none" stroke="#add8e6" stroke-width="2"/>`;
  });
  out += '<path d="M98 102V327M574 102V603" stroke="#add8e6" stroke-width="2"/>';

  sells.forEach(([x, y]) => {
    out += `<path transform="translate(${x + 0.5} ${y + 1})" d="M-1.500-14h3v7l3-3h1v4L0 0l-5.500-6v-4h1l3 3z" fill="#ffd400"/>`;
  });
  buys.forEach(([x, y]) => {
    out += `<path transform="translate(${x + 0.5} ${y})" d="M-1.500 14h3V7l3 3h1V6L0 0l-5.500 6v4h1l3-3z" fill="#00ffff"/>`;
  });

  out += '<path d="M1022 102V653" stroke="#fff" stroke-width="2"/><path d="M1019 102h6v5h-6zM1019 648h6v6h-6z" fill="#fff"/>';
  document.getElementById('candles').innerHTML = `<g transform="translate(-34 -102)" shape-rendering="crispEdges">${out}</g>`;
}

function fillLists() {
  document.getElementById('pairs').innerHTML = pairs.map((name, i) => {
    const cls = i === 0 ? ' first' : name === 'GBPNZDi' ? ' active' : '';
    return `<button class="pair${cls}">${name}</button>`;
  }).join('');
  document.getElementById('priceList').innerHTML = prices.map(p => `<div class="price">${p}</div>`).join('');
  document.getElementById('timeList').innerHTML = times.map(t => `<div class="time">${t}</div>`).join('');
}

drawChart();
fillLists();
```
